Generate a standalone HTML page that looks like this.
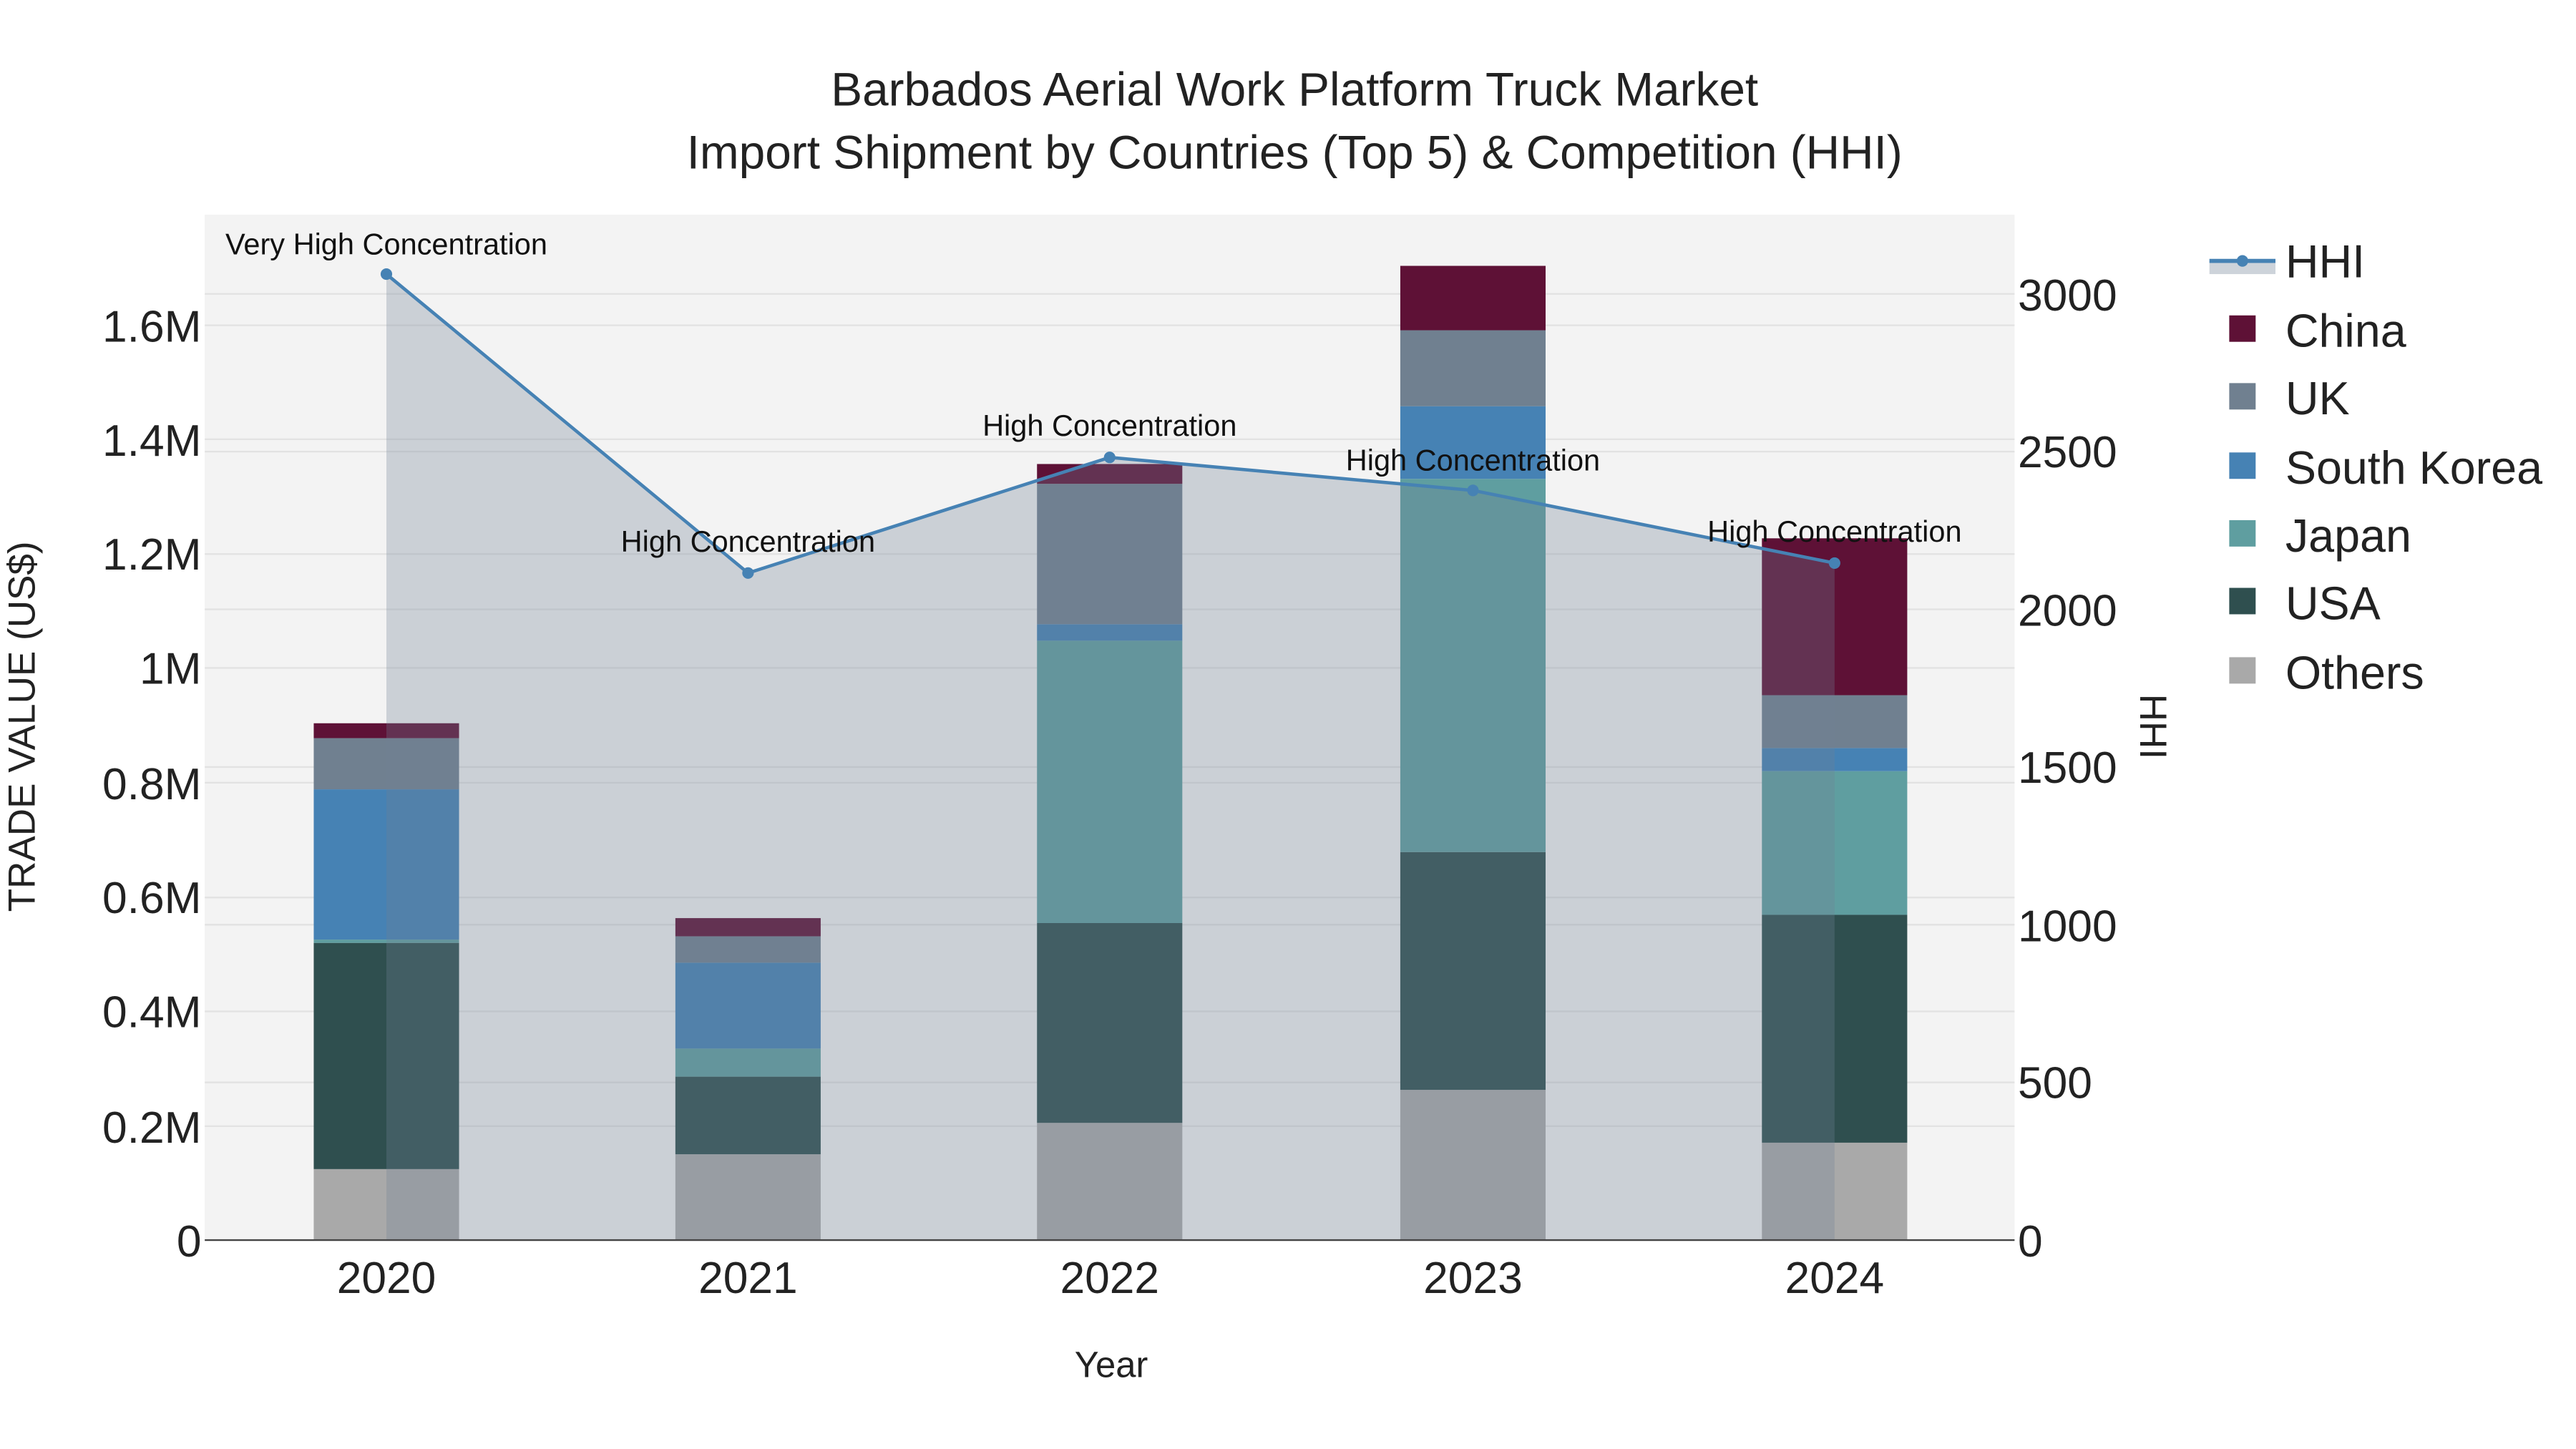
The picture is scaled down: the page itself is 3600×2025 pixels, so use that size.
<!DOCTYPE html>
<html><head><meta charset="utf-8"><style>html,body{margin:0;padding:0;background:#fff}svg{display:block}</style></head><body>
<svg width="3600" height="2025" viewBox="0 0 1560 877.5" xmlns="http://www.w3.org/2000/svg" font-family="Liberation Sans, sans-serif">
<rect width="1560" height="877.5" fill="#fff"/>
<text x="784" y="64" font-size="28.5" text-anchor="middle" fill="#222">Barbados Aerial Work Platform Truck Market</text>
<text x="784" y="102" font-size="28.5" text-anchor="middle" fill="#222">Import Shipment by Countries (Top 5) &amp; Competition (HHI)</text>
<rect x="124" y="130" width="1096" height="621" fill="#f3f3f3"/>
<g stroke="#e2e2e2" stroke-width="1">
<line x1="124" x2="1220" y1="682" y2="682"/><line x1="124" x2="1220" y1="612.5" y2="612.5"/><line x1="124" x2="1220" y1="543.5" y2="543.5"/><line x1="124" x2="1220" y1="474" y2="474"/><line x1="124" x2="1220" y1="404.5" y2="404.5"/><line x1="124" x2="1220" y1="335.5" y2="335.5"/><line x1="124" x2="1220" y1="266" y2="266"/><line x1="124" x2="1220" y1="197" y2="197"/>
<line x1="124" x2="1220" y1="655.5" y2="655.5"/><line x1="124" x2="1220" y1="560" y2="560"/><line x1="124" x2="1220" y1="464.5" y2="464.5"/><line x1="124" x2="1220" y1="369" y2="369"/><line x1="124" x2="1220" y1="273.5" y2="273.5"/><line x1="124" x2="1220" y1="178" y2="178"/>
</g>
<g>
<rect x="190" y="708" width="88" height="43" fill="#a9a9a9"/><rect x="190" y="571" width="88" height="137" fill="#2f4f4f"/><rect x="190" y="569" width="88" height="2" fill="#5f9ea0"/><rect x="190" y="478" width="88" height="91" fill="#4682b4"/><rect x="190" y="447" width="88" height="31" fill="#708090"/><rect x="190" y="438" width="88" height="9" fill="#5e1136"/>
<rect x="409" y="699" width="88" height="52" fill="#a9a9a9"/><rect x="409" y="652" width="88" height="47" fill="#2f4f4f"/><rect x="409" y="635" width="88" height="17" fill="#5f9ea0"/><rect x="409" y="583" width="88" height="52" fill="#4682b4"/><rect x="409" y="567" width="88" height="16" fill="#708090"/><rect x="409" y="556" width="88" height="11" fill="#5e1136"/>
<rect x="628" y="680" width="88" height="71" fill="#a9a9a9"/><rect x="628" y="559" width="88" height="121" fill="#2f4f4f"/><rect x="628" y="388" width="88" height="171" fill="#5f9ea0"/><rect x="628" y="378" width="88" height="10" fill="#4682b4"/><rect x="628" y="293" width="88" height="85" fill="#708090"/><rect x="628" y="281" width="88" height="12" fill="#5e1136"/>
<rect x="848" y="660" width="88" height="91" fill="#a9a9a9"/><rect x="848" y="516" width="88" height="144" fill="#2f4f4f"/><rect x="848" y="290" width="88" height="226" fill="#5f9ea0"/><rect x="848" y="246" width="88" height="44" fill="#4682b4"/><rect x="848" y="200" width="88" height="46" fill="#708090"/><rect x="848" y="161" width="88" height="39" fill="#5e1136"/>
<rect x="1067" y="692" width="88" height="59" fill="#a9a9a9"/><rect x="1067" y="554" width="88" height="138" fill="#2f4f4f"/><rect x="1067" y="467" width="88" height="87" fill="#5f9ea0"/><rect x="1067" y="453" width="88" height="14" fill="#4682b4"/><rect x="1067" y="421" width="88" height="32" fill="#708090"/><rect x="1067" y="326" width="88" height="95" fill="#5e1136"/>
</g>
<polygon points="234,751 234,166 453,347 672,277 892,297 1111,341 1111,751" fill="rgb(112,128,150)" fill-opacity="0.3"/>
<polyline points="234,166 453,347 672,277 892,297 1111,341" fill="none" stroke="#4682b4" stroke-width="2"/>
<g fill="#4682b4"><circle cx="234" cy="166" r="3.5"/><circle cx="453" cy="347" r="3.5"/><circle cx="672" cy="277" r="3.5"/><circle cx="892" cy="297" r="3.5"/><circle cx="1111" cy="341" r="3.5"/></g>
<g font-size="18" text-anchor="middle" fill="#111">
<text x="234" y="154">Very High Concentration</text><text x="453" y="334">High Concentration</text><text x="672" y="264">High Concentration</text><text x="892" y="285">High Concentration</text><text x="1111" y="328">High Concentration</text>
</g>
<line x1="124" x2="1220" y1="751" y2="751" stroke="#444" stroke-width="1"/>
<g font-size="27" text-anchor="end" fill="#222">
<text x="122" y="761">0</text><text x="122" y="692">0.2M</text><text x="122" y="622">0.4M</text><text x="122" y="553">0.6M</text><text x="122" y="484">0.8M</text><text x="122" y="414">1M</text><text x="122" y="345">1.2M</text><text x="122" y="276">1.4M</text><text x="122" y="207">1.6M</text>
</g>
<g font-size="27" fill="#222">
<text x="1222" y="761">0</text><text x="1222" y="665">500</text><text x="1222" y="570">1000</text><text x="1222" y="474">1500</text><text x="1222" y="379">2000</text><text x="1222" y="283">2500</text><text x="1222" y="188">3000</text>
</g>
<g font-size="27" text-anchor="middle" fill="#222">
<text x="234" y="783">2020</text><text x="453" y="783">2021</text><text x="672" y="783">2022</text><text x="892" y="783">2023</text><text x="1111" y="783">2024</text>
</g>
<text x="673" y="834" font-size="22" text-anchor="middle" fill="#222">Year</text>
<text transform="translate(21,440) rotate(-90)" font-size="23" text-anchor="middle" fill="#222">TRADE VALUE (US$)</text>
<text transform="translate(1296,440) rotate(90)" font-size="23" text-anchor="middle" fill="#222">HHI</text>
<g font-size="28" fill="#222">
<rect x="1338" y="158" width="40" height="8" fill="rgb(112,128,150)" fill-opacity="0.35"/>
<line x1="1338" x2="1378" y1="158" y2="158" stroke="#4682b4" stroke-width="2.5"/><circle cx="1358" cy="158" r="3.5" fill="#4682b4"/>
<text x="1384" y="168">HHI</text>
<rect x="1350" y="191" width="16" height="16" fill="#5e1136"/><text x="1384" y="210">China</text>
<rect x="1350" y="232" width="16" height="16" fill="#708090"/><text x="1384" y="251">UK</text>
<rect x="1350" y="274" width="16" height="16" fill="#4682b4"/><text x="1384" y="293">South Korea</text>
<rect x="1350" y="315" width="16" height="16" fill="#5f9ea0"/><text x="1384" y="334">Japan</text>
<rect x="1350" y="356" width="16" height="16" fill="#2f4f4f"/><text x="1384" y="375">USA</text>
<rect x="1350" y="398" width="16" height="16" fill="#a9a9a9"/><text x="1384" y="417">Others</text>
</g>
</svg>
</body></html>
